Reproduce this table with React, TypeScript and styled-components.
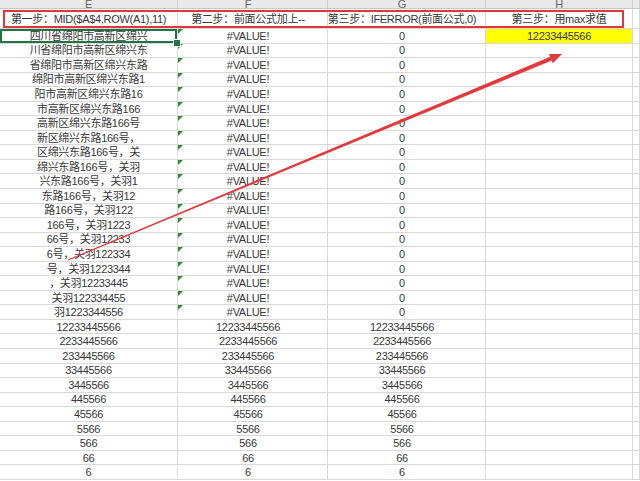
import React from "react";
import styled, { createGlobalStyle, css } from "styled-components";

const GlobalStyle = createGlobalStyle`
  html, body { margin: 0; padding: 0; background: #ffffff; overflow: hidden; }
  * { box-sizing: border-box; }
`;

const COLS = "178px 150px 158px 147px 1fr";
const GRID = "#d9d9d9";

const Sheet = styled.div`
  position: relative;
  width: 640px;
  height: 481px;
  overflow: hidden;
  background: #ffffff;
  font-family: "Liberation Sans", "Noto Sans CJK SC", sans-serif;
  font-size: 11px;
  letter-spacing: -0.3px;
  color: #383838;
`;

const HeaderRow = styled.div`
  display: grid;
  grid-template-columns: ${COLS};
  height: 9px;
  background: #e9e9e9;
  border-bottom: 1px solid #c8c8c8;
`;

const HeaderCell = styled.div<{ $shift?: number }>`
  display: flex;
  align-items: flex-end;
  justify-content: center;
  overflow: hidden;
  border-right: 1px solid #cfcfcf;
  color: #666666;
  font-size: 11px;
  line-height: 1;
  padding-right: ${(p) => p.$shift ?? 0}px;
  span { margin-bottom: -2px; }
`;

const Row = styled.div<{ $h: number }>`
  display: grid;
  grid-template-columns: ${COLS};
  height: ${(p) => p.$h}px;
`;

const Cell = styled.div<{
  $shift?: number;
  $fill?: string;
  $selected?: boolean;
  $flag?: boolean;
}>`
  position: relative;
  display: flex;
  align-items: center;
  justify-content: center;
  white-space: nowrap;
  overflow: visible;
  border-right: 1px solid ${GRID};
  border-bottom: 1px solid ${GRID};
  padding-right: ${(p) => p.$shift ?? 0}px;
  padding-top: 1px;
  background: ${(p) => p.$fill ?? "transparent"};
  line-height: 1;
  ${(p) =>
    p.$selected &&
    css`
      box-shadow: inset 0 0 0 2px #217346;
      &::after {
        content: "";
        position: absolute;
        right: -4px;
        bottom: -4px;
        width: 6px;
        height: 6px;
        background: #217346;
        border: 1px solid #ffffff;
        z-index: 2;
      }
    `}
  ${(p) =>
    p.$flag &&
    css`
      &::before {
        content: "";
        position: absolute;
        left: 0;
        top: 0;
        width: 0;
        height: 0;
        border-top: 5px solid #2e8b30;
        border-right: 5px solid transparent;
      }
    `}
`;

const RedFrame = styled.div`
  position: absolute;
  left: 3px;
  top: 10px;
  width: 621px;
  height: 18px;
  border: 2px solid #e0363c;
  pointer-events: none;
`;

const ArrowLayer = styled.svg`
  position: absolute;
  left: 0;
  top: 0;
  width: 640px;
  height: 481px;
  pointer-events: none;
`;

const colE = [
  "四川省绵阳市高新区绵兴",
  "川省绵阳市高新区绵兴东",
  "省绵阳市高新区绵兴东路",
  "绵阳市高新区绵兴东路1",
  "阳市高新区绵兴东路16",
  "市高新区绵兴东路166",
  "高新区绵兴东路166号",
  "新区绵兴东路166号，",
  "区绵兴东路166号，关",
  "绵兴东路166号，关羽",
  "兴东路166号，关羽1",
  "东路166号，关羽12",
  "路166号，关羽122",
  "166号，关羽1223",
  "66号，关羽12233",
  "6号，关羽122334",
  "号，关羽1223344",
  "，关羽12233445",
  "关羽122334455",
  "羽1223344556",
  "12233445566",
  "2233445566",
  "233445566",
  "33445566",
  "3445566",
  "445566",
  "45566",
  "5566",
  "566",
  "66",
  "6",
];

export default function App() {
  return (
    <>
      <GlobalStyle />
      <Sheet>
        <HeaderRow>
          <HeaderCell>
            <span>E</span>
          </HeaderCell>
          <HeaderCell $shift={9}>
            <span>F</span>
          </HeaderCell>
          <HeaderCell $shift={9}>
            <span>G</span>
          </HeaderCell>
          <HeaderCell>
            <span>H</span>
          </HeaderCell>
          <HeaderCell />
        </HeaderRow>
        <Row $h={20}>
          <Cell>第一步：MID($A$4,ROW(A1),11)</Cell>
          <Cell $shift={9}>第二步：前面公式加上--</Cell>
          <Cell $shift={9}>第三步：IFERROR(前面公式,0)</Cell>
          <Cell>第三步：用max求值</Cell>
          <Cell />
        </Row>
        {colE.map((e, i) => {
          const isErr = i < 20;
          return (
            <Row key={i} $h={14.55}>
              <Cell $selected={i === 0}>{e}</Cell>
              <Cell $shift={9} $flag={isErr}>
                {isErr ? "#VALUE!" : e}
              </Cell>
              <Cell $shift={9}>{isErr ? "0" : e}</Cell>
              <Cell $fill={i === 0 ? "#ffff00" : undefined}>
                {i === 0 ? "12233445566" : ""}
              </Cell>
              <Cell />
            </Row>
          );
        })}
        <RedFrame />
        <ArrowLayer viewBox="0 0 640 481">
          <polygon
            points="68.2,260.5 67.8,259.5 550.2,56.8 551.8,60.4"
            fill="#e5383b"
          />
          <polygon
            points="562,54 552.8,63.2 549.0,54.0"
            fill="#e5383b"
          />
        </ArrowLayer>
      </Sheet>
    </>
  );
}
